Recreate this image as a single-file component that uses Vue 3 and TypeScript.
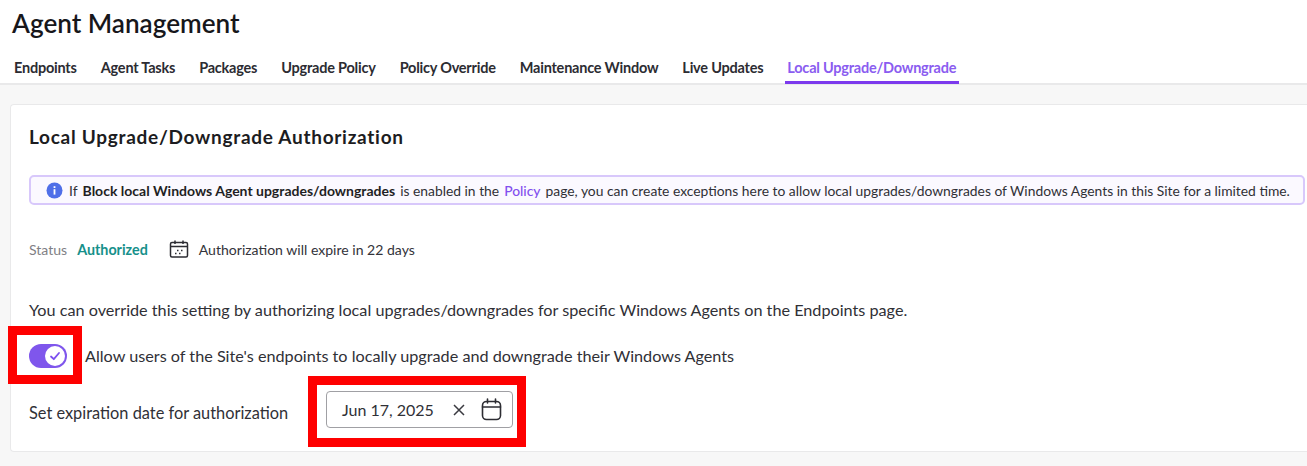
<script setup lang="ts">
const tabs: string[] = ['Endpoints', 'Agent Tasks', 'Packages', 'Upgrade Policy', 'Policy Override', 'Maintenance Window', 'Live Updates', 'Local Upgrade/Downgrade']
const activeTab = 'Local Upgrade/Downgrade'
</script>

<template>
  <div class="page">
    <header class="head">
      <h1 class="title">Agent Management</h1>
      <nav class="tabs">
        <span v-for="t in tabs" :key="t" class="tab" :class="{ active: t === activeTab }">{{ t }}</span>
      </nav>
    </header>
    <main class="body">
      <section class="card">
        <h2 class="card-title">Local Upgrade/Downgrade Authorization</h2>
        <div class="banner">
          <svg class="info" width="17" height="17" viewBox="0 0 17 17">
            <circle cx="8.5" cy="8.5" r="8" fill="#4f6fe8" />
            <rect x="7.6" y="7.2" width="1.8" height="5.4" fill="#fff" />
            <rect x="7.6" y="4.2" width="1.8" height="1.8" fill="#fff" />
          </svg>
          <span>If</span>
          <b>Block local Windows Agent upgrades/downgrades</b>
          <span>is enabled in the</span>
          <a class="link">Policy</a>
          <span>page, you can create exceptions here to allow local upgrades/downgrades of Windows Agents in this Site for a limited time.</span>
        </div>
        <div class="status">
          <span class="status-label">Status</span>
          <span class="status-value">Authorized</span>
          <svg class="cal-small" width="20" height="20" viewBox="0 0 20 20" fill="none" stroke="#2d2d33" stroke-width="1.5">
            <rect x="1.5" y="3.5" width="17" height="14.5" rx="1.5" />
            <path d="M1.5 7.5h17M6 1.5v3.5M14 1.5v3.5" />
            <path d="M8 11.5h1.5M12 11.5h1.5M6 14.5h1.5M10 14.5h1.5" stroke-width="1.4" />
          </svg>
          <span class="status-text">Authorization will expire in 22 days</span>
        </div>
        <p class="override">You can override this setting by authorizing local upgrades/downgrades for specific Windows Agents on the Endpoints page.</p>
        <div class="toggle-row">
          <span class="toggle">
            <span class="knob">
              <svg width="12" height="12" viewBox="0 0 12 12" fill="none" stroke="#7c4ff0" stroke-width="1.8" stroke-linecap="round" stroke-linejoin="round">
                <path d="M2 6.5 4.8 9.2 10 3" />
              </svg>
            </span>
          </span>
          <span class="toggle-label">Allow users of the Site's endpoints to locally upgrade and downgrade their Windows Agents</span>
        </div>
        <div class="date-row">
          <span class="date-label">Set expiration date for authorization</span>
          <div class="date-input">
            <span class="date-value">Jun 17, 2025</span>
            <svg class="clear" width="14" height="14" viewBox="0 0 14 14" fill="none" stroke="#3a3a40" stroke-width="1.5">
              <path d="M2 2l10 10M12 2 2 12" />
            </svg>
            <svg width="21" height="23" viewBox="0 0 21 23" fill="none" stroke="#2d2d33" stroke-width="1.6" stroke-linecap="round">
              <rect x="1.5" y="3.5" width="18" height="18" rx="4" />
              <path d="M1.5 9h18M6.5 1v4M14.5 1v4" />
            </svg>
          </div>
        </div>
      </section>
    </main>
    <div class="mark mark-toggle"></div>
    <div class="mark mark-date"></div>
  </div>
</template>

<style scoped>
.page {
  position: relative;
  width: 1307px;
  height: 466px;
  overflow: hidden;
  background: #f7f7f7;
  font-family: Lato, "Liberation Sans", sans-serif;
  color: #26262b;
  display: flex;
  flex-direction: column;
}
.head {
  height: 83px;
  background: #fff;
  border-bottom: 2px solid #e9e9ea;
  padding-left: 12px;
  flex: none;
  box-sizing: content-box;
  display: flex;
  flex-direction: column;
}
.title {
  margin: 8px 0 0;
  font-size: 26.1px;
  line-height: 31px;
  font-weight: 600;
  color: #17171b;
}
.tabs {
  display: flex;
  gap: 19px;
  margin-top: 13px;
}
.tab {
  height: 32px;
  line-height: 31px;
  padding: 0 3px 0 2px;
  font-size: 14.5px;
  font-weight: 700;
  letter-spacing: -0.22px;
  color: #2c2c32;
  box-sizing: border-box;
  white-space: nowrap;
}
.tab.active {
  color: #8a5cf0;
  border-bottom: 3px solid #7c3aed;
}
.body {
  flex: 1;
  padding: 19px 0 14px 10px;
  min-height: 0;
  display: flex;
}
.card {
  flex: 1;
  background: #fff;
  border: 1px solid #e9e9ea;
  border-right: none;
  border-radius: 4px 0 0 4px;
  padding: 21px 0 0 18px;
  min-width: 0;
}
.card-title {
  margin: 0;
  font-size: 19px;
  line-height: 22px;
  font-weight: 700;
  letter-spacing: 0.72px;
  color: #1c1c21;
}
.banner {
  margin: 27px 2px 0 0;
  height: 30px;
  box-sizing: border-box;
  border: 2px solid #d8c8fb;
  border-radius: 5px;
  background: #fbf9ff;
  display: flex;
  align-items: center;
  padding-left: 15px;
  font-size: 13.85px;
  color: #303036;
  white-space: nowrap;
  gap: 5px;
}
.banner b {
  font-size: 14px;
  font-weight: 700;
  color: #1f1f24;
}
.info {
  margin-right: 1px;
  flex: none;
}
.link {
  color: #8250ee;
  font-weight: 500;
}
.status {
  margin-top: 34px;
  display: flex;
  align-items: center;
  height: 20px;
  font-size: 14.05px;
}
.status-label {
  color: #7f7f85;
}
.status-value {
  color: #16908a;
  font-weight: 700;
  font-size: 14.3px;
  margin-left: 10px;
}
.cal-small {
  margin-left: 21px;
}
.status-text {
  margin-left: 10px;
  color: #33333a;
}
.override {
  margin: 41px 0 0;
  font-size: 16.22px;
  line-height: 20px;
  color: #303036;
}
.toggle-row {
  margin-top: 23px;
  display: flex;
  align-items: center;
  height: 25px;
}
.toggle {
  width: 38px;
  height: 24px;
  border-radius: 12px;
  background: #7f56ec;
  display: flex;
  align-items: center;
  justify-content: flex-end;
  padding-right: 2px;
  box-sizing: border-box;
}
.knob {
  width: 20px;
  height: 20px;
  border-radius: 50%;
  background: #fff;
  display: flex;
  align-items: center;
  justify-content: center;
}
.toggle-label {
  margin-left: 18px;
  font-size: 16.22px;
  color: #303036;
}
.date-row {
  margin-top: 23px;
  display: flex;
  align-items: center;
}
.date-label {
  font-size: 16.35px;
  color: #303036;
  width: 297px;
  flex: none;
  margin-top: 5px;
}
.date-input {
  width: 187px;
  height: 37px;
  border: 1.5px solid #a0a0a4;
  border-radius: 4px;
  box-sizing: border-box;
  display: flex;
  align-items: center;
  padding-left: 15px;
  font-size: 16px;
  color: #303036;
}
.date-value {
  width: 110px;
  flex: none;
}
.clear {
  margin-right: 15px;
  flex: none;
}
.mark {
  position: absolute;
  box-sizing: border-box;
  border: 9px solid #fe0000;
  pointer-events: none;
}
.mark-toggle {
  left: 8px;
  top: 326px;
  width: 74px;
  height: 58px;
}
.mark-date {
  left: 308px;
  top: 376px;
  width: 218px;
  height: 71px;
}
</style>
